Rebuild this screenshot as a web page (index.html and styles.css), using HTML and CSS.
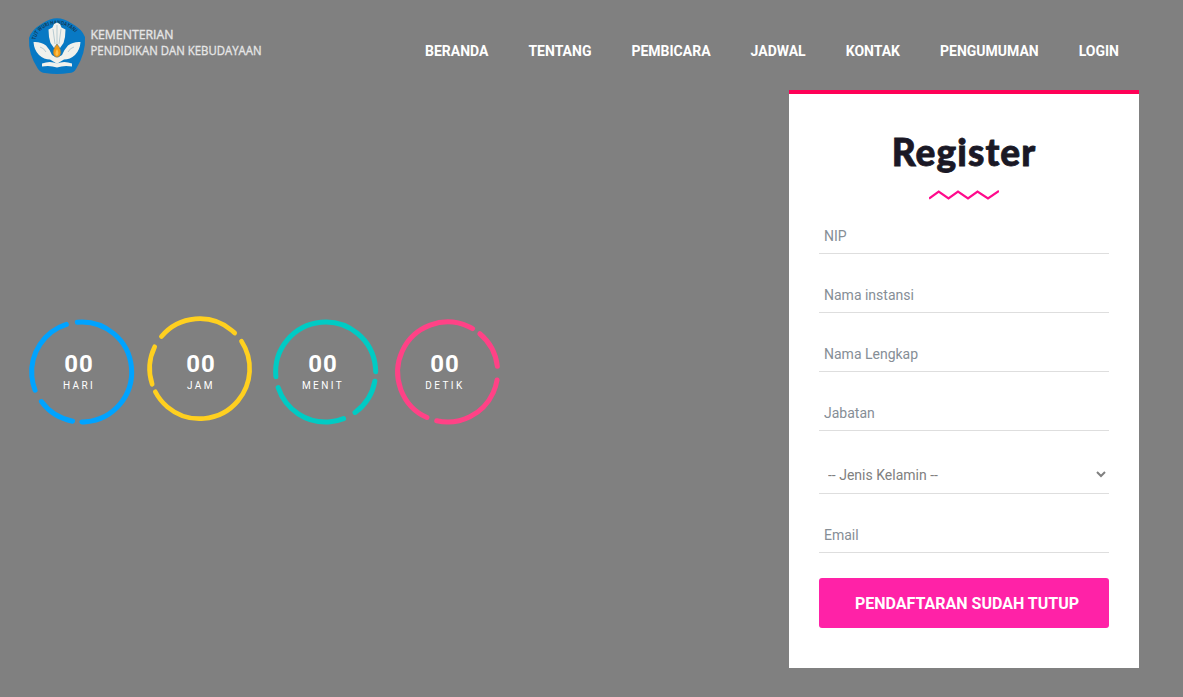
FILE: index.html
```html
<!DOCTYPE html>
<html lang="id">
<head>
<meta charset="utf-8">
<title>Register</title>
<link rel="stylesheet" href="styles.css">
</head>
<body>
<header class="header">
  <a class="logo" href="#">
    <svg width="250" height="60" viewBox="0 0 250 60" role="img" aria-label="Kementerian Pendidikan dan Kebudayaan">
      <path d="M17 7Q31 -2.5 45 7Q56 13 59 21Q60 37 50 53Q48 57 43 57Q31 59 19 57Q15 57 12 53Q2 38 3 22Q5 14 17 7Z" fill="#0879c4"/>
      <path id="ring" d="M9.500 24C14 3 48 3 52.500 25" fill="none"/>
      <text class="logo-motto"><textPath href="#ring" textLength="49" lengthAdjust="spacingAndGlyphs">TUT WURI HANDAYANI</textPath></text>
      <g fill="#f1f1ec">
        <path d="M7.500 26Q15 25.500 20 29.500L23.500 34L26 39Q31 43 36 39L38.500 34L42 29.500Q47 25.500 54.500 26Q54 34 49 39Q44 43.500 38 43.500L33 46.500L31 48L29 46.500L24 43.500Q18 43.500 13 39Q8 34 7.500 26Z"/>
        <path d="M22.500 13.500L26.500 11.500L28 8L31 6.500L34 8L35.500 11.500L39.500 13.500L39 21L37.500 27L34 32H28L24.500 27L23 21Z"/>
        <path d="M16 47.500Q24 44.500 31 47.500Q38 44.500 46 47.500L46 50.500Q38 49 31 51.500Q24 49 16 50.500Z"/>
      </g>
      <path d="M27 13L29 28M31 9V28M35 13L33 28M14 31Q18 32 20 36M48 31Q44 32 42 36" fill="none" stroke="#9dbac7" stroke-width=".7"/>
      <path d="M31 28Q37 35 34 39.500Q31 43 28 39.500Q25 35 31 28Z" fill="#f29a13" stroke="#4f7586" stroke-width=".6"/>
      <path d="M31 33Q33.500 37 31.500 39.500H30Q28.500 37 31 33Z" fill="#ffc04b"/>
      <text class="logo-name" x="64.5" y="23" textLength="83" lengthAdjust="spacingAndGlyphs">KEMENTERIAN</text>
      <text class="logo-name" x="64.5" y="39" textLength="171" lengthAdjust="spacingAndGlyphs">PENDIDIKAN DAN KEBUDAYAAN</text>
    </svg>
  </a>
  <nav class="nav">
    <a href="#">BERANDA</a><a href="#">TENTANG</a><a href="#">PEMBICARA</a><a href="#">JADWAL</a><a href="#">KONTAK</a><a href="#">PENGUMUMAN</a><a href="#">LOGIN</a>
  </nav>
</header>
<main class="main">
  <section class="countdown">
    <div class="unit blue">
      <svg class="ring" viewBox="0 0 366 360"><circle cx="191" cy="186" r="150" pathLength="360" transform="rotate(265 191 186)" stroke-dasharray="184.6 10.7 43.1 14.9 93.4 13.3"/></svg>
      <span class="value">00</span><span class="label">HARI</span>
    </div>
    <div class="unit yellow">
      <svg class="ring" viewBox="0 0 366 360"><circle cx="179" cy="176" r="150" pathLength="360" transform="rotate(220.1 179 176)" stroke-dasharray="94.4 12.2 185.5 9.2 44.1 14.6"/></svg>
      <span class="value">00</span><span class="label">JAM</span>
    </div>
    <div class="unit teal">
      <svg class="ring" viewBox="0 0 366 360"><circle cx="191" cy="186" r="150" pathLength="360" transform="rotate(174.7 191 186)" stroke-dasharray="184.9 10.8 43.3 14.9 92.8 13.3"/></svg>
      <span class="value">00</span><span class="label">MENIT</span>
    </div>
    <div class="unit pink">
      <svg class="ring" viewBox="0 0 366 360"><circle cx="191" cy="186" r="150" pathLength="360" transform="rotate(114.5 191 186)" stroke-dasharray="185.2 10.2 43.1 15.9 93.3 12.3"/></svg>
      <span class="value">00</span><span class="label">DETIK</span>
    </div>
  </section>
  <form class="card">
    <h2 class="title">Register</h2>
    <svg class="zigzag" width="70" height="10" viewBox="0 0 70 10"><path d="M0 8.6L9.7 1.5L19.5 8.5L29 1.5L39 8.5L48.500 1.5L59 8.5L70 1"/></svg>
    <input class="field" type="text" placeholder="NIP">
    <input class="field" type="text" placeholder="Nama instansi">
    <input class="field" type="text" placeholder="Nama Lengkap">
    <input class="field" type="text" placeholder="Jabatan">
    <select class="field select"><option>-- Jenis Kelamin --</option></select>
    <input class="field" type="email" placeholder="Email">
    <button class="submit" type="button">PENDAFTARAN SUDAH TUTUP</button>
  </form>
</main>
</body>
</html>
```
FILE: styles.css
```css
* { box-sizing: border-box; }
body {
  margin: 0;
  height: 697px;
  overflow: hidden;
  background: #808080;
  font-family: Roboto, "Liberation Sans", sans-serif;
}
.header {
  height: 90px;
  padding: 16px 64px 0 26px;
  display: flex;
  justify-content: space-between;
  align-items: flex-start;
}
.logo { display: block; height: 60px; }
.logo svg { display: block; overflow: visible; }
.logo-motto { font: 700 5.5px "Open Sans", sans-serif; fill: #123b58; }
.logo-name { font: 400 13.5px "Open Sans", sans-serif; fill: #e6e6e6; stroke: #e6e6e6; stroke-width: .35; }
.nav { display: flex; gap: 40px; padding-top: 25px; }
.nav a {
  color: #fff;
  font-size: 14px;
  font-weight: 700;
  line-height: 20px;
  text-decoration: none;
}
.main {
  display: flex;
  justify-content: space-between;
  align-items: flex-start;
  padding: 0 44px 0 18px;
}
.countdown { display: flex; padding-top: 220px; }
.unit {
  width: 122px;
  height: 120px;
  display: grid;
  grid-template-rows: 40px 28px 16px;
  justify-items: center;
  color: #fff;
}
.ring {
  grid-area: 1 / 1 / 4 / 2;
  width: 122px;
  height: 120px;
  fill: none;
  stroke-width: 15;
  stroke-linecap: round;
}
.blue .ring { stroke: #00a3ff; }
.yellow .ring { stroke: #ffd01f; stroke-width: 14; }
.teal .ring { stroke: #00cbc4; }
.pink .ring { stroke: #ff4286; }
.value {
  grid-area: 2 / 1;
  font-size: 24px;
  font-weight: 700;
  line-height: 28px;
  letter-spacing: 1px;
}
.label {
  grid-area: 3 / 1;
  font-size: 10px;
  line-height: 16px;
  letter-spacing: 2.4px;
}
.card {
  width: 350px;
  height: 578px;
  padding: 36px 30px 0;
  border-top: 4px solid #ff0057;
  background: #fff;
  display: flex;
  flex-direction: column;
}
.title {
  margin: 0;
  height: 46px;
  color: #1a1825;
  font: 900 37px/43px Lato, sans-serif;
  letter-spacing: 1.1px;
  -webkit-text-stroke: .8px #1a1825;
  text-align: center;
}
.zigzag {
  align-self: center;
  margin: 14px 0 19px;
  fill: none;
  stroke: #ff0a8c;
  stroke-width: 2.2;
}
.field {
  width: 100%;
  height: 35px;
  margin: 0 0 24px;
  padding: 0 5px;
  border: 0;
  border-bottom: 1px solid #dedede;
  border-radius: 0;
  background: #fff;
  font: 400 14px Roboto, sans-serif;
  outline: 0;
}
.field::placeholder { color: #868e96; opacity: 1; }
.select { height: 39px; padding: 2px 0 0 5px; color: #808080; }
.submit {
  height: 50px;
  margin: 1px 0 0;
  padding: 0 0 0 6px;
  border: 0;
  border-radius: 3px;
  background: #ff22a7;
  color: #fff;
  font: 700 16px Roboto, sans-serif;
}
```
